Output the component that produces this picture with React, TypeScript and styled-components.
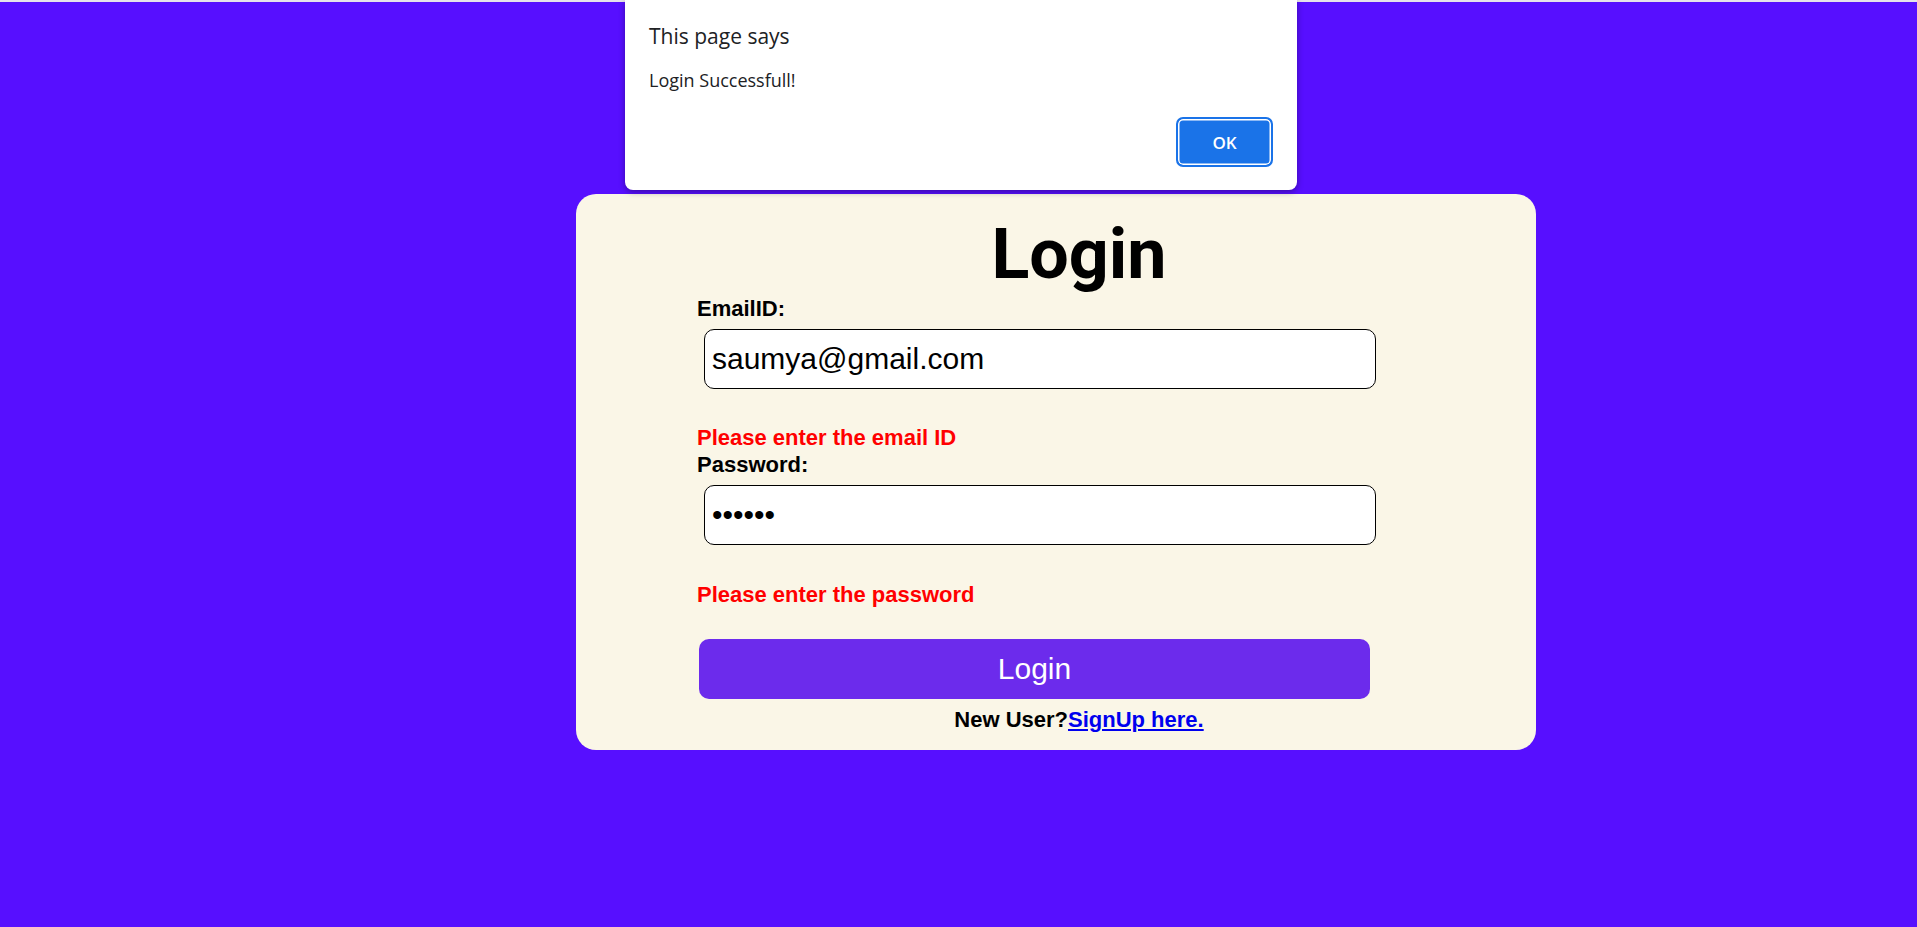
import React, { useState } from 'react';
import styled, { createGlobalStyle } from 'styled-components';

const GlobalStyle = createGlobalStyle`
  html, body {
    margin: 0;
    padding: 0;
  }
  body {
    background: #570fff;
    font-family: 'Liberation Sans', Arial, sans-serif;
  }
`;

const Page = styled.div`
  position: relative;
  min-height: 927px;
  background: #570fff;
  display: flex;
  flex-direction: column;
`;

const TopStrip = styled.div`
  height: 2px;
  background: #e6e3ea;
`;

const Card = styled.div`
  margin: 192px 0 0 576px;
  width: 960px;
  box-sizing: border-box;
  padding: 20px 0 17px 46px;
  background: #faf6e7;
  border-radius: 20px;
  display: flex;
  flex-direction: column;
`;

const Heading = styled.h1`
  margin: 0;
  text-align: center;
  font-family: Roboto, 'Liberation Sans', sans-serif;
  font-weight: 700;
  font-size: 70px;
  line-height: 80px;
  color: #000;
`;

const Fields = styled.form`
  margin: 1px 0 0 75px;
  width: 680px;
  display: flex;
  flex-direction: column;
`;

const Label = styled.label`
  font-weight: 700;
  font-size: 22px;
  line-height: 27px;
  color: #000;
`;

const Input = styled.input`
  margin: 7px 0 0 7px;
  width: 672px;
  height: 60px;
  box-sizing: border-box;
  padding: 0 7px;
  border: 1px solid #000;
  border-radius: 10px;
  background: #fff;
  font-family: 'Liberation Sans', Arial, sans-serif;
  font-size: 30px;
  color: #000;
  outline: none;
`;

const ErrorText = styled.div`
  margin-top: ${(p: { $gap: number }) => p.$gap}px;
  font-weight: 700;
  font-size: 22px;
  line-height: 27px;
  color: #f00;
`;

const SubmitButton = styled.button`
  margin: 31px 0 0 2px;
  width: 671px;
  height: 60px;
  border: none;
  border-radius: 10px;
  background: #6c2bec;
  color: #fff;
  font-family: 'Liberation Sans', Arial, sans-serif;
  font-size: 30px;
  cursor: pointer;
`;

const Footer = styled.div`
  margin-top: 7px;
  text-align: center;
  font-weight: 700;
  font-size: 22px;
  line-height: 27px;
  color: #000;

  a {
    color: #0000ee;
    text-decoration: underline;
  }
`;

const Alert = styled.div`
  position: absolute;
  top: 0;
  left: 625px;
  width: 672px;
  height: 190px;
  box-sizing: border-box;
  padding: 22px 24px 0 24px;
  background: #fff;
  border-radius: 0 0 8px 8px;
  box-shadow: 0 2px 6px rgba(0, 0, 0, 0.35);
  display: flex;
  flex-direction: column;
  font-family: 'Open Sans', 'Noto Sans', sans-serif;
  color: #202124;
`;

const AlertTitle = styled.div`
  font-size: 21px;
  line-height: 29px;
`;

const AlertMessage = styled.div`
  margin-top: 17px;
  font-size: 18px;
  line-height: 24px;
`;

const AlertActions = styled.div`
  margin-top: 25px;
  display: flex;
  justify-content: flex-end;
`;

const OkButton = styled.button`
  width: 97px;
  height: 50px;
  box-sizing: border-box;
  border: 2px solid #1a73e8;
  border-radius: 7px;
  background: #1a73e8;
  box-shadow: inset 0 0 0 1.5px #fff;
  color: #fff;
  font-family: 'Open Sans', 'Noto Sans', sans-serif;
  font-weight: 600;
  font-size: 17px;
  cursor: pointer;
`;

const App: React.FC = () => {
  const [email, setEmail] = useState('saumya@gmail.com');
  const [password, setPassword] = useState('123456');
  const [showAlert, setShowAlert] = useState(true);

  return (
    <Page>
      <GlobalStyle />
      <TopStrip />
      <Card>
        <Heading>Login</Heading>
        <Fields onSubmit={(e) => e.preventDefault()}>
          <Label htmlFor="email">EmailID:</Label>
          <Input id="email" type="text" value={email} onChange={(e) => setEmail(e.target.value)} />
          <ErrorText $gap={35}>Please enter the email ID</ErrorText>
          <Label htmlFor="password">Password:</Label>
          <Input id="password" type="password" value={password} onChange={(e) => setPassword(e.target.value)} />
          <ErrorText $gap={36}>Please enter the password</ErrorText>
          <SubmitButton type="submit" onClick={() => setShowAlert(true)}>Login</SubmitButton>
        </Fields>
        <Footer>
          New User?<a href="#signup">SignUp here.</a>
        </Footer>
      </Card>
      {showAlert && (
        <Alert>
          <AlertTitle>This page says</AlertTitle>
          <AlertMessage>Login Successfull!</AlertMessage>
          <AlertActions>
            <OkButton onClick={() => setShowAlert(false)}>OK</OkButton>
          </AlertActions>
        </Alert>
      )}
    </Page>
  );
};

export default App;
